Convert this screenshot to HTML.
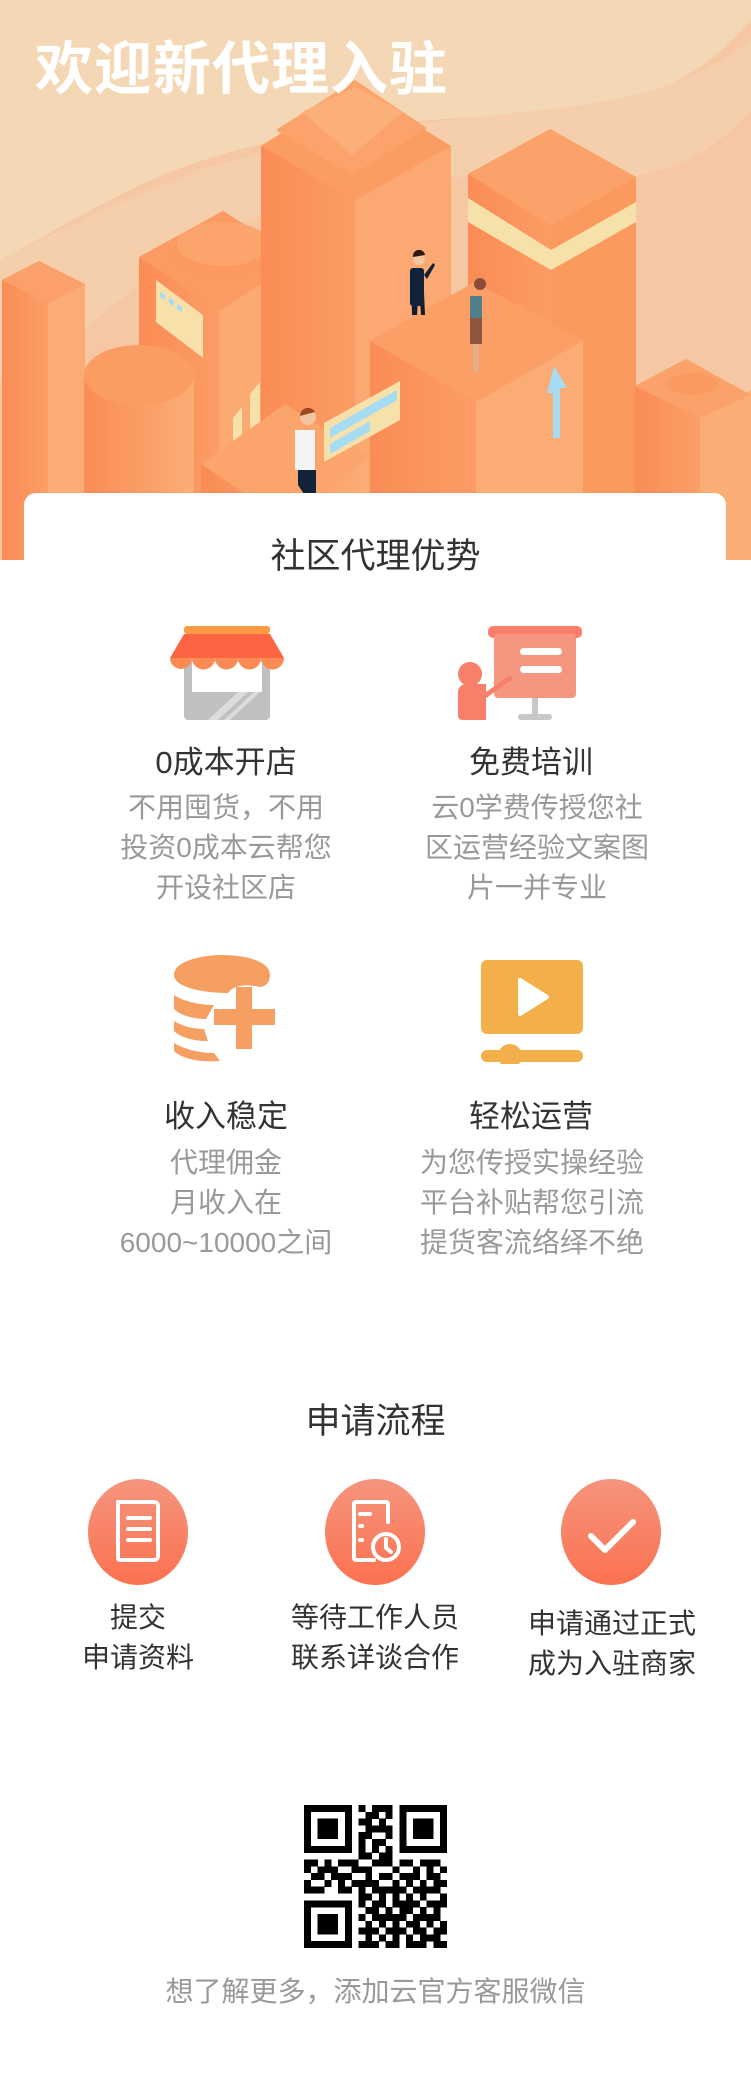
<!DOCTYPE html>
<html><head><meta charset="utf-8"><style>
*{margin:0;padding:0;box-sizing:border-box}
body{width:751px;height:2078px;background:#fff;font-family:"Liberation Sans","Noto Sans CJK SC",sans-serif;position:relative;overflow:hidden}
.abs{position:absolute}
.t{position:absolute;text-align:center;white-space:nowrap}
.h2{font-size:35px;color:#333;left:0;width:751px}
.lab{font-size:31px;color:#333;width:300px}
.desc{font-size:28px;color:#999;width:320px;line-height:40px}
.plab{font-size:28px;color:#333;width:260px;line-height:40px}
</style></head><body>
<svg class="abs" style="left:0;top:0" width="751" height="560" viewBox="0 0 751 560">
<defs>
<linearGradient id="bo" x1="0" y1="0" x2="1" y2="0"><stop offset="0" stop-color="#fb8c55"/><stop offset="1" stop-color="#fbad76"/></linearGradient>
</defs>
<rect width="751" height="560" fill="#f5c7a3"/>
<path d="M0 0H751V20C700 80 640 110 520 115C400 120 250 130 130 190C70 220 30 245 0 260Z" fill="#f4d8b5"/>
<path d="M751 40V110C700 170 630 185 560 180C450 170 330 180 230 230C150 270 80 330 40 370L0 380V260C40 240 120 200 200 170C330 130 450 120 540 110C640 100 700 80 751 40Z" fill="#f5cfac"/>
<path d="M2 280L39 261L85 284L85 560L2 560Z" fill="url(#bo)"/>
<path d="M2 280L39 261L85 284L48 304Z" fill="#fba06a"/>
<path d="M48 304L85 284V560H48Z" fill="#fbac76"/>
<path d="M139 257L223 211L300 259L300 560L139 560Z" fill="url(#bo)"/>
<path d="M139 257L223 211L300 259L219 311Z" fill="#fb9a62"/>
<path d="M219 311L300 259V560H219Z" fill="#fbaa72"/>
<ellipse cx="223" cy="250" rx="50" ry="26" fill="#fb9960"/>
<ellipse cx="223" cy="244" rx="46" ry="22" fill="#fba46c"/>
<path d="M156 280L203 315V358L156 322Z" fill="#f7e0a9"/>
<path d="M160 292l5 3v5l-5-3zM169 298l5 3v5l-5-3zM177 304l5 3v5l-5-3z" fill="#a6dcf3"/>
<path d="M233 418l9-11v40l-9 11zM250 394l10-12v48l-10 12zM268 385l10-11v37l-10 11z" fill="#f7e0a9"/>
<path d="M84 375V560H194V375Z" fill="url(#bo)"/>
<ellipse cx="139" cy="375" rx="55" ry="30" fill="#fb9c63"/>
<path d="M261 146L355 87L451 146V560H261Z" fill="url(#bo)"/>
<path d="M355 200L451 146V560H355Z" fill="#fba872"/>
<path d="M261 146L355 87L451 146L355 200Z" fill="#fb9c63"/>
<path d="M276 130L355 80L427 128L352 175Z" fill="#fba36b"/>
<path d="M302 112L355 87L403 112L352 155Z" fill="#fbb07a"/>
<path d="M468 174L550 129L636 177V560H468Z" fill="url(#bo)"/>
<path d="M551 225L636 177V560H551Z" fill="#fb9a5f"/>
<path d="M468 174L550 129L636 177L551 225Z" fill="#fba26a"/>
<path d="M468 198L551 250L636 202V222L551 270L468 222Z" fill="#f7e1aa"/>
<path d="M370 341L475 282L583 341V560H370Z" fill="url(#bo)"/>
<path d="M370 341L475 282L583 341L476 402Z" fill="#fb9f66"/>
<path d="M476 402L583 341V560H476Z" fill="#fbab74"/>
<path d="M554 366l13 22h-7v50l-7 0v-45h-6z" fill="#a6dcf3"/>
<path d="M635 386L686 359L751 395V560H635Z" fill="url(#bo)"/>
<path d="M700 418L751 390V560H700Z" fill="#fbad76"/>
<path d="M635 386L686 359L751 395L700 418Z" fill="#fba26a"/>
<ellipse cx="692" cy="384" rx="26" ry="11" fill="#fb9a60"/>
<path d="M201 464L285 404L369 457V560H201Z" fill="url(#bo)"/>
<path d="M201 464L285 404L369 457L285 520Z" fill="#fba46c"/>
<path d="M411 270h12l2 45h-4l-2-30-2 30h-5z" fill="#0f1e2e"/>
<rect x="410" y="268" width="14" height="38" rx="3" fill="#10233a"/>
<circle cx="419" cy="259" r="6" fill="#f1c6a0"/><path d="M413 257a6 6 0 0 1 12 -2l-12 2z" fill="#2a1a10"/>
<path d="M424 275l9-12 2 2-8 14z" fill="#10233a"/>
<circle cx="480" cy="284" r="6" fill="#8a4d37"/>
<path d="M470 296h12v22h-12z" fill="#527f8c"/><path d="M470 318h12v26h-12z" fill="#8c5640"/>
<path d="M473 344h6v28h-6z" fill="#e4ae8a"/>
<path d="M295 430h20v40h-20z" fill="#f4f4f4"/>
<circle cx="308" cy="417" r="8" fill="#f1c6a0"/>
<path d="M300 416a8 8 0 0 1 15 -4l-15 4z" fill="#9c4a22"/>
<path d="M298 470h18v30l-8 0-10-15z" fill="#10233a"/>
<path d="M324 423L400 381V420L324 462Z" fill="#f7e1aa"/>
<path d="M330 428L397 390V400L330 438ZM330 444L370 421V431L330 454Z" fill="#a6dcf3"/>
</svg>
<div class="abs" style="left:35px;top:22px;font-size:58px;font-weight:bold;color:#fff;letter-spacing:1px">欢迎新代理入驻</div>
<div class="abs" style="left:24px;top:493px;width:702px;height:200px;background:#fff;border-radius:12px 12px 0 0"></div>

<div class="t h2" style="top:528px">社区代理优势</div>

<svg class="abs" style="left:168px;top:626px" width="118" height="96" viewBox="0 0 118 96">
<rect x="16" y="34" width="86" height="60" rx="4" fill="#c0c0c0"/>
<rect x="24" y="36" width="70" height="30" fill="#fff"/>
<path d="M40 94l30-28h10l-30 28zM56 94l30-28h6l-30 28z" fill="#dcdcdc"/>
<rect x="16" y="0" width="86" height="8" rx="3" fill="#fb9a45"/>
<path d="M16 8h86l14 24H2z" fill="#fb6541"/>
<path d="M2 32a10 10 0 0 0 22 0a10 10 0 0 0 23 0a10 10 0 0 0 23 0a10 10 0 0 0 23 0a10 10 0 0 0 23 0z" fill="#fb8a54"/>
</svg>
<svg class="abs" style="left:456px;top:626px" width="128" height="96" viewBox="0 0 128 96">
<rect x="32" y="0" width="94" height="12" rx="5" fill="#f8806a"/>
<rect x="38" y="8" width="82" height="64" rx="4" fill="#f59780"/>
<rect x="64" y="22" width="42" height="7" rx="3.5" fill="#fff"/>
<rect x="64" y="40" width="42" height="7" rx="3.5" fill="#fff"/>
<rect x="76" y="72" width="6" height="18" fill="#c8c8c8"/>
<rect x="62" y="88" width="34" height="6" rx="3" fill="#c8c8c8"/>
<circle cx="14" cy="48" r="12" fill="#f8806a"/>
<path d="M2 66a8 8 0 0 1 8-8h20v36H6a4 4 0 0 1-4-4z" fill="#f8806a"/>
<path d="M26 72l28-20" stroke="#f8806a" stroke-width="5" stroke-linecap="round"/>
</svg>
<div class="t lab" style="left:76px;top:737px">0成本开店</div>
<div class="t lab" style="left:381px;top:737px">免费培训</div>
<div class="t desc" style="left:66px;top:788px">不用囤货，不用<br>投资0成本云帮您<br>开设社区店</div>
<div class="t desc" style="left:377px;top:788px">云0学费传授您社<br>区运营经验文案图<br>片一并专业</div>

<svg class="abs" style="left:172px;top:955px" width="110" height="110" viewBox="0 0 110 110">
<path d="M2 20C2 6 30 0 50 0S98 5 98 20C98 30 90 32 88 32C70 28 60 32 56 38C30 38 2 32 2 20Z" fill="#f5a062"/>
<path d="M2 40c12 8 30 10 40 10l-8 14C20 64 8 60 2 54zM2 66c10 6 20 8 30 8l4 12C20 86 8 82 2 76z" fill="#f5a062"/>
<path d="M2 88c10 6 24 10 40 10l6 8C24 108 8 102 2 96z" fill="#f5a062"/>
<rect x="42" y="54" width="61" height="16" fill="#f5a062"/>
<rect x="64" y="32" width="16" height="62" fill="#f5a062"/>
</svg>
<svg class="abs" style="left:480px;top:960px" width="104" height="104" viewBox="0 0 104 104">
<rect x="1" y="0" width="102" height="74" rx="6" fill="#f3b04a"/>
<path d="M40 20l27 17-27 17z" fill="#fff" stroke="#fff" stroke-width="4" stroke-linejoin="round"/>
<rect x="1" y="90" width="102" height="12" rx="6" fill="#f3b04a"/>
<circle cx="30" cy="96" r="12" fill="#f3b04a"/>
</svg>
<div class="t lab" style="left:76px;top:1091px">收入稳定</div>
<div class="t lab" style="left:381px;top:1091px">轻松运营</div>
<div class="t desc" style="left:66px;top:1143px">代理佣金<br>月收入在<br>6000~10000之间</div>
<div class="t desc" style="left:372px;top:1143px">为您传授实操经验<br>平台补贴帮您引流<br>提货客流络绎不绝</div>

<div class="t h2" style="top:1393px">申请流程</div>

<svg class="abs" style="left:88px;top:1478px" width="600" height="110" viewBox="0 0 600 110">
<defs><linearGradient id="cg" x1="0" y1="0" x2="0" y2="1"><stop offset="0" stop-color="#f5957e"/><stop offset="1" stop-color="#fb7150"/></linearGradient></defs>
<ellipse cx="50" cy="54" rx="50" ry="53" fill="url(#cg)"/>
<ellipse cx="287" cy="54" rx="50" ry="53" fill="url(#cg)"/>
<ellipse cx="523" cy="54" rx="50" ry="53" fill="url(#cg)"/>
<g fill="none" stroke="#fff" stroke-width="4" stroke-linecap="round" stroke-linejoin="round">
<path d="M30 24h36a4 4 0 0 1 4 4v50a4 4 0 0 1-4 4H32a2 2 0 0 1-2-2z"/>
<path d="M40 40h22M40 51h22M40 62h22"/>
<path d="M286 82h-18a2 2 0 0 1-2-2V26a2 2 0 0 1 2-2h30a2 2 0 0 1 2 2v18"/>
<path d="M272 36h10M272 48h2M272 62h2"/>
<circle cx="298" cy="69" r="13"/>
<path d="M298 61v9l5 4"/>
<path d="M503 58l14 14 28-28" stroke-width="6"/>
</g>
</svg>
<div class="t plab" style="left:8px;top:1598px">提交<br>申请资料</div>
<div class="t plab" style="left:245px;top:1598px">等待工作人员<br>联系详谈合作</div>
<div class="t plab" style="left:482px;top:1604px">申请通过正式<br>成为入驻商家</div>

<svg id="qr" class="abs" style="left:303px;top:1805px" width="145" height="143" viewBox="0 0 21 21" shape-rendering="crispEdges"></svg>
<div class="t desc" style="left:0;width:751px;top:1972px">想了解更多，添加云官方客服微信</div>
<script>
var rows=[
"111111101011101111111",
"100000100110101000001",
"101110101101001011101",
"101110100111101011101",
"101110101100101011101",
"100000101011001000001",
"111111101010101111111",
"000000001101100000000",
"110101110011101101110",
"101110011100010010101",
"011011100101101110110",
"100101011110010101011",
"111001101011111011110",
"000000001101010101001",
"111111101011011110111",
"100000100110101101010",
"101110101011111011110",
"101110100101010110101",
"101110101110111011011",
"100000100101010101110",
"111111101110110111011"];
var s="";for(var y=0;y<21;y++)for(var x=0;x<21;x++)if(rows[y][x]=="1")s+='<rect x="'+x+'" y="'+y+'" width="1.02" height="1.02" fill="#000"/>';
document.getElementById("qr").innerHTML=s;
</script>
</body></html>
